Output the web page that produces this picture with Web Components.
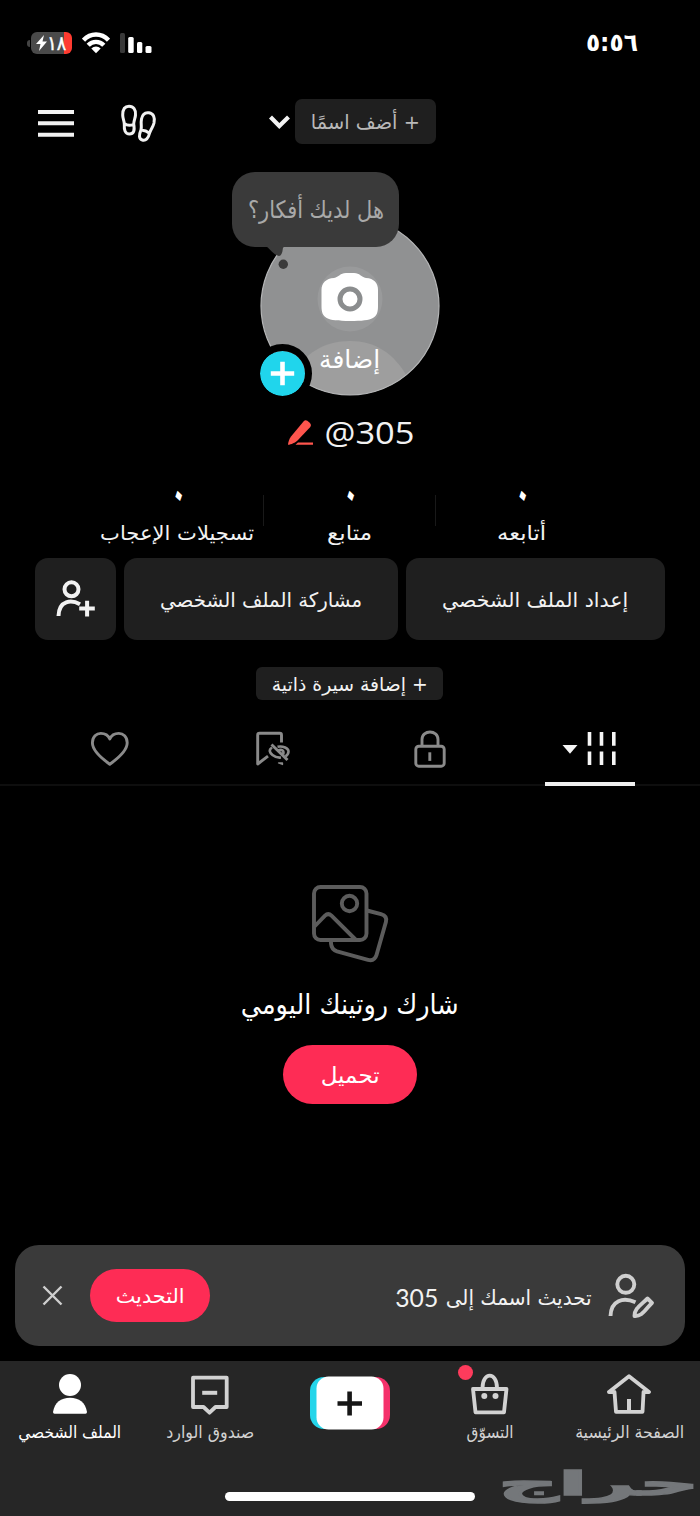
<!DOCTYPE html>
<html lang="ar">
<head>
<meta charset="utf-8">
<title>الملف الشخصي</title>
<style>
html,body{margin:0;background:#000}
body{width:700px;height:1516px;overflow:hidden;font-family:"DejaVu Sans","Noto Sans",sans-serif;color:#f2f2f2}
</style>
</head>
<body>
<profile-page></profile-page>
<script>
const define=(n,html,fn)=>{
  const t=document.createElement('template');t.innerHTML=html;
  customElements.define(n,class extends HTMLElement{
    connectedCallback(){
      if(this.shadowRoot)return;
      this.attachShadow({mode:'open'}).append(t.content.cloneNode(true));
      if(fn)fn(this,this.shadowRoot);
    }
  });
};

/* One line of text squeezed or stretched to the width w; y nudges the baseline. */
define('fit-text',`<style>
:host{display:inline-flex;justify-content:center;flex:none;white-space:nowrap;line-height:1;direction:rtl}
span{display:block;flex:none;transform-origin:50% 50%}
</style><span><slot></slot></span>`,(el,r)=>{
  const s=r.querySelector('span'),w=+el.getAttribute('w');
  el.style.width=w+'px';el.style.height=el.getAttribute('s')+'px';
  el.style.fontSize=el.getAttribute('s')+'px';
  const n=s.getBoundingClientRect().width||w;
  s.style.transform=`translateY(${el.getAttribute('y')||0}px) scaleX(${w/n})`;
});

/* Icons: [viewBox, markup]. */
const S='fill="none" stroke="currentColor" stroke-linecap="round" stroke-linejoin="round"';
const ICONS={
wifi:['82 32 28 22',`<g fill="none" stroke="currentColor" stroke-width="4.4"><path d="M83.5 40.2C90.5 32.6 101.500 32.600 108.500 40.200"/><path d="M88.200 45.300C92.500 40.700 99.500 40.700 103.800 45.300"/></g><path d="M91.300 48.500C94 45.800 98 45.800 100.700 48.500L96 53.200Z" fill="currentColor"/>`],
signal:['120 32 32 22',`<g fill="currentColor"><rect x="120" y="33" width="5" height="20" rx="1.500" opacity=".22"/><rect x="128.200" y="37" width="5.500" height="16" rx="1.500"/><rect x="137" y="42" width="5.300" height="11" rx="1.500"/><rect x="145.500" y="46" width="6" height="7" rx="1.500"/></g>`],
menu:['38 104 36 38',`<path d="M38 112h36M38 123.200h36M38 134.700h36" fill="none" stroke="currentColor" stroke-width="4"/>`],
feet:['120 103 38 40',`<g ${S} stroke-width="3"><path d="M122.700 115C122.700 109 125 106.200 129 106.200C133.500 106.200 136 109.500 135.500 115C135.200 118.500 134 119.500 133.700 124C135 131 133.500 134 129.500 134C125 134 124 130 124.300 124C124.300 120.500 122.700 119 122.700 115ZM124.300 123.500C127 125.500 130 126 133.700 124.300"/><path d="M141.500 119C142.500 114 145 112.200 149 112.800C153.500 113.600 155.200 117.500 154 123C153 127 151.500 128 149.800 132.500C148.300 138.500 145.800 141 142.300 140C138.700 139 138.800 135 141 129.800C142 126 140.500 124 141.500 119ZM140.800 130.500C143.500 130 146.500 131 149.500 133.200"/></g>`],
chev:['268 113 23 18',`<path d="M270.500 116L279.300 125L288.500 116" fill="none" stroke="currentColor" stroke-width="4.200"/>`],
plus:['268 359 29 29',`<path d="M270.800 373.500h23.400M282.500 361.800v23.400" stroke="currentColor" stroke-width="4.600"/>`],
pencil:['286 419 28 28',`<g fill="#fe554d"><path d="M288 444.800C288 442.500 289.500 438.500 291 436.500L303.500 421.500Q305.300 419.500 307.300 420.800L310 423Q311.900 425 310.300 426.900L297.500 440.500C295.500 442.500 291 444.700 288 444.800Z"/><path d="M298 442.600h15v2.200h-17.500z"/></g>`],
adduser:['54.500 578 42 42',`<g fill="none" stroke="currentColor" stroke-width="4"><circle cx="71" cy="589.300" r="7"/><path d="M58 616C58.500 600 71 599.500 79.500 604.300M78.700 608.500h15.600M86.600 600.800v15.600"/></g>`],
heart:['90 730 40 38',`<path ${S} stroke-width="2.900" d="M109.800 764.200C101 758 92.400 750.500 92.400 742.800C92.400 736.500 96.500 733.400 100.800 733.400C105 733.400 108.300 735.500 109.800 739C111.300 735.500 114.600 733.400 118.800 733.400C123.100 733.400 127.200 736.500 127.200 742.800C127.200 750.500 118.600 758 109.800 764.200Z"/>`],
save:['255 730 38 38',`<g fill="none" stroke="currentColor" stroke-width="2.900" stroke-linejoin="round"><path d="M281.500 742.500V735Q281.500 733.300 279.800 733.300H259.500Q257.700 733.300 257.700 735V764L268 756.200"/><path stroke-width="2.600" d="M272 747.500C268.500 750 269.500 752.500 272.500 755C275 757 278.500 757.800 281 757.500M277.500 746.800C283 745.500 288.500 748.500 288.500 751.500C288.500 753 287.500 755 285.500 756.300M278 750.500C282 748.500 284.500 751 283 754.500"/><path d="M271.500 744.500L287.500 760"/><path d="M278.500 763h4v1.500z" stroke-width="1.300"/></g>`],
lock:['413 728 34 40',`<g fill="none" stroke="currentColor" stroke-width="2.900"><rect x="415.800" y="745.200" width="28.400" height="20" rx="3"/><path d="M422 745V738.500C422 728.500 438 728.500 438 738.500V745"/><path d="M429.800 751.300v8.600"/></g>`],
grid:['561 730 56 38',`<path d="M561.500 745h15l-7.500 8.800z" fill="currentColor"/><path d="M588.500 732v13.700M600.500 732v13.700M612.800 732v13.700M588.500 751.500V765M600.500 751.500V765M612.800 751.500V765" stroke="currentColor" stroke-width="3.600"/>`],
photos:['310 882 80 82',`<g fill="none" stroke="currentColor" stroke-width="3.900" stroke-linejoin="round"><rect x="314" y="887" width="52.500" height="53" rx="6.500"/><circle cx="349.500" cy="903.500" r="7.700"/><path d="M314.500 926.500L325 915.700Q328.200 912.600 331.500 915.700L355.500 939.500M367 910.500L381 914.200Q387.500 916 385.900 922L376.500 955Q374.500 961.500 368 959.800L337 951.300Q331.500 949.500 331 943.500V940"/></g>`],
edituser:['606 1272 50 48',`<g fill="none" stroke="currentColor" stroke-width="3.900" stroke-linejoin="round"><circle cx="625.800" cy="1284.300" r="8.500"/><path d="M610.500 1316C611 1300.500 623 1296.500 635.500 1302.300"/><path d="M634.500 1316C634.500 1309 639 1306.500 647.500 1298.500L652 1302.800C644 1311 642 1316.500 634.500 1316Z"/></g>`],
close:['42 1285 21 21',`<path d="M43.500 1286.500L61.500 1304.500M61.500 1286.500L43.500 1304.500" fill="none" stroke="currentColor" stroke-width="2.400"/>`],
person:['50 1372 40 44',`<g fill="currentColor"><circle cx="70" cy="1385" r="11"/><path d="M53 1412C54.500 1402.500 61 1397.700 70 1397.700S85.500 1402.500 87 1412Q87 1413.800 85.500 1413.800H54.500Q53 1413.800 53 1412Z"/></g>`],
inbox:['190 1372 40 44',`<path ${S} stroke-width="3.800" d="M193 1377.700H226.700V1407H215.500L209.500 1412.700L203.500 1407H193Z"/><path d="M202.200 1392.800h15" stroke="currentColor" stroke-width="4"/>`],
create:['308 1372 84 60',`<rect x="310" y="1377" width="60" height="52" rx="14" fill="#25d5ea"/><rect x="330" y="1377" width="60" height="52" rx="14" fill="#f5316b"/><rect x="316.500" y="1376.500" width="67" height="53" rx="12" fill="#fff"/><path d="M337.500 1403.500h24.500M349.600 1391.500v24" stroke="#161616" stroke-width="4.600"/>`],
bag:['470 1372 40 44',`<g ${S} stroke-width="3.800"><path d="M473 1389H506.500L504 1412.300H475.500Z"/><path d="M482.500 1388C482.500 1371.500 497 1371.500 497 1388"/></g><g fill="currentColor"><circle cx="484.300" cy="1396" r="3"/><circle cx="495.500" cy="1396" r="3"/></g>`],
house:['607 1372 46 44',`<path ${S} stroke-width="3.800" d="M609 1392L629 1376.200L649 1392H643.500V1393L642.500 1411.800H616L614.500 1392H609"/><path d="M629 1399v12" stroke="currentColor" stroke-width="4"/>`]
};
define('ui-icon',`<style>:host{display:block;flex:none}svg{display:block}</style><svg></svg>`,(el,r)=>{
  const [vb,m]=ICONS[el.getAttribute('name')],v=vb.split(' '),s=r.querySelector('svg');
  s.setAttribute('viewBox',vb);s.setAttribute('width',v[2]);s.setAttribute('height',v[3]);s.innerHTML=m;
});

define('status-bar',`<style>
:host{display:flex;height:86px;padding:0 62px 0 27px;align-items:center;color:#fff;box-sizing:border-box}
.nub{width:3px;height:7px;border-radius:3px 0 0 3px;background:#444;margin-right:1px}
.bat{width:41px;height:22px;border-radius:6px;background:linear-gradient(90deg,#4a4a4a 33px,#ff3b30 33px);display:flex;align-items:center;gap:0;padding-left:5px;box-sizing:border-box}
.wifi{margin:0 10px}.time{margin-left:auto}
</style><i class="nub"></i><div class="bat"><svg width="11" height="16" viewBox="0 0 11 16"><path d="M8 0L0 9h4.500L3 16l8-9.500H6.500z" fill="#fff"/></svg><fit-text w="19" s="20" y="0" style="-webkit-text-stroke:.5px #fff">١٨</fit-text></div>
<ui-icon class="wifi" name="wifi"></ui-icon><ui-icon name="signal"></ui-icon><fit-text class="time" w="52" s="25" y="-1.500" style="font-weight:bold">٥:٥٦</fit-text>`);

define('text-chip',`<style>:host{display:flex;align-items:center;justify-content:center;background:#1f1f1f;border-radius:7px;box-sizing:border-box;flex:none}</style><slot></slot>`);

define('top-bar',`<style>
:host{display:flex;height:74px;padding:0 0 0 38px;align-items:center;box-sizing:border-box}
.feet{margin-left:46px}.chev{margin:0 4px 0 110px}
text-chip{width:141px;height:45px;color:#b9b9b9;margin-bottom:4px}
</style><ui-icon name="menu"></ui-icon><ui-icon class="feet" name="feet"></ui-icon><ui-icon class="chev" name="chev"></ui-icon><text-chip><fit-text w="109" s="20" y="1">+ أضف اسمًا</fit-text></text-chip>`);

/* Picture placeholder with the thought bubble and the add badge laid over it. */
define('profile-photo',`<style>
:host{display:block;position:relative;width:180px;height:180px;margin:56px 0 0 260px}
.art{display:block}
.cap{position:absolute;left:59px;top:131px;color:#fff}
.bub{position:absolute;left:-28px;top:-44px;width:167px;height:75px;border-radius:23px;background:#3a3a3a;display:flex;align-items:center;justify-content:center;color:#a9a9a9}
.tail{position:absolute;left:0;top:28px}
.add{position:absolute;left:-7px;top:128px;width:45px;height:45px;border:7px solid #000;border-radius:50%;background:#20d5ec;background-clip:padding-box;display:flex;align-items:center;justify-content:center;color:#fff}
</style>
<svg class="art" width="180" height="180" viewBox="260 216 180 180"><defs><clipPath id="c"><circle cx="350" cy="306" r="89"/></clipPath></defs><circle cx="350" cy="306" r="89" fill="#909192"/><g clip-path="url(#c)" fill="#9e9e9e"><circle cx="350" cy="299" r="32.500" fill="#999a9b"/><path d="M292 378C303 353 325 341 350 341S394 353 408 378V400H292Z"/></g><circle cx="350" cy="306" r="89" fill="none" stroke="#b5b6b7" stroke-width="1.200"/>
<path d="M334 278C339 277 340 273 346 273H354C360 273 361 277 366 278C374 278.500 378 283 378 290V306C378 318 374 321 350 321S321.500 318 321.500 306V290C321.500 283 326 278.500 334 278Z" fill="#fff"/><circle cx="350" cy="299" r="10" fill="#fff" stroke="#8b8d8e" stroke-width="5"/></svg>
<fit-text class="cap" w="61" s="25" y="0">إضافة</fit-text>
<div class="bub"><fit-text w="136" s="24" y="0">هل لديك أفكار؟</fit-text></div>
<svg class="tail" width="32" height="28" viewBox="260 244 32 28"><path d="M264 245C270 248 273 255 279 256Q282 256 283 248L286 245Z" fill="#3a3a3a"/><circle cx="283.300" cy="264.300" r="4.700" fill="#3a3a3a"/></svg>
<div class="add"><ui-icon name="plus"></ui-icon></div>`);

define('user-handle',`<style>:host{display:flex;height:34px;margin:20px 0 0 286px;align-items:center}fit-text{direction:ltr;margin-left:10px;font-family:"Open Sans",sans-serif;font-weight:500}</style><ui-icon name="pencil"></ui-icon><fit-text w="90" s="31" y="-1" dir="ltr">@305</fit-text>`);

/* The Arabic zero is drawn as a small slanted diamond. */
define('stat-item',`<style>:host{display:flex;flex-direction:column;align-items:center;width:171px;box-sizing:border-box;height:66px}b{display:block;font-size:36px;line-height:30px;height:30px;color:#fff;transform-origin:50% 17px;transform:translate(.8px,-1px) rotate(-14deg) scale(.78,1.2) rotate(45deg)}</style><b><slot name="n"></slot></b><slot></slot>`);
define('stats-row',`<style>:host{display:flex;height:76px;margin-top:30px;padding-left:92px;box-sizing:border-box}i{width:1px;height:31px;margin-top:15px;background:#191919;flex:none}stat-item{width:171px}fit-text{margin-top:13px}</style>
<stat-item><span slot="n">٠</span><fit-text w="154" s="20">تسجيلات الإعجاب</fit-text></stat-item><i></i><stat-item><span slot="n">٠</span><fit-text w="45" s="20">متابع</fit-text></stat-item><i></i><stat-item><span slot="n">٠</span><fit-text w="49" s="20">أتابعه</fit-text></stat-item>`);

define('action-row',`<style>:host{display:flex;gap:8px;padding:0 35px;margin-top:2px;height:82px}
text-chip{border-radius:13px;height:82px}.a{width:81px}.b{width:273.500px}.c{flex:1}</style>
<text-chip class="a"><ui-icon name="adduser"></ui-icon></text-chip><text-chip class="b"><fit-text w="202" s="20" y="1">مشاركة الملف الشخصي</fit-text></text-chip><text-chip class="c"><fit-text w="186" s="20" y="1">إعداد الملف الشخصي</fit-text></text-chip>`);

define('bio-row',`<style>:host{display:flex;justify-content:center;margin-top:27px;height:33px;padding-right:1px}text-chip{width:187px;border-radius:6px}</style><text-chip><fit-text w="156" s="19" y="1">+ إضافة سيرة ذاتية</fit-text></text-chip>`);

define('tab-strip',`<style>:host{display:grid;grid-template-columns:160px 160px 160px 160px;padding:0 30px;height:86px;border-bottom:2px solid #0e0e0e;box-sizing:border-box;color:#8a8a8a}
div{display:flex;align-items:center;justify-content:center;padding-bottom:0;padding-top:14px;height:84px;box-sizing:border-box;position:relative}
.on{color:#f5f5f5}.on::after{content:"";position:absolute;left:35px;bottom:-2px;width:90px;height:4px;background:#f0f0f0}</style>
<div><ui-icon name="heart"></ui-icon></div><div><ui-icon name="save" style="margin-left:8px"></ui-icon></div><div><ui-icon name="lock"></ui-icon></div><div class="on"><ui-icon name="grid"></ui-icon></div>`);

define('pill-button',`<style>:host{display:flex;align-items:center;justify-content:center;background:#fe2c55;color:#fff;border-radius:40px;flex:none}</style><slot></slot>`);
define('empty-state',`<style>:host{display:flex;flex-direction:column;align-items:center;padding-top:96px;height:459px;box-sizing:border-box}
ui-icon{color:#5c5c5c}.t{margin-top:25px;color:#fff}pill-button{width:134px;height:59px;margin-top:28px}</style>
<ui-icon name="photos"></ui-icon><fit-text class="t" w="218" s="28" y="1.5">شارك روتينك اليومي</fit-text><pill-button><fit-text w="59" s="22" y="1">تحميل</fit-text></pill-button>`);

define('update-banner',`<style>:host{display:flex;align-items:center;margin:0 15px;height:101px;background:#3a3a3a;border-radius:24px;padding:0 29px 0 27px;box-sizing:border-box;color:#cfcfcf}
pill-button{width:119.500px;height:53px;margin-left:27px}.t{display:flex;margin:0 14px 0 auto;gap:8px;align-items:center;color:#f2f2f2}.n{font-family:Lato,sans-serif}</style>
<ui-icon name="close"></ui-icon><pill-button><fit-text w="69" s="20">التحديث</fit-text></pill-button><div class="t"><fit-text class="n" w="43" s="25" y="2">305</fit-text><fit-text w="146" s="21" y="3">تحديث اسمك إلى</fit-text></div><ui-icon name="edituser"></ui-icon>`);

define('nav-item',`<style>:host{display:flex;flex-direction:column;align-items:center;width:140px;position:relative;color:#d2d2d2}i{position:absolute;left:38px;top:-7px;width:15px;height:15px;border-radius:50%;background:#fe3b5c;display:none}:host([dot]) i{display:block}</style><slot></slot><i></i>`);
define('bottom-nav',`<style>:host{display:block;position:relative;height:155px;margin-top:15px;background:#262626}
nav{display:flex;padding-top:11px}nav fit-text{margin-top:8px}.on{color:#fff}
.bar{width:250px;height:9px;border-radius:5px;background:#fff;position:absolute;left:225px;top:131px}
.wm{position:absolute;left:498px;top:106px;font-weight:bold;color:#74777a;-webkit-text-stroke:1.500px #74777a}</style>
<nav><nav-item class="on"><ui-icon name="person"></ui-icon><fit-text w="103" s="17">الملف الشخصي</fit-text></nav-item><nav-item><ui-icon name="inbox"></ui-icon><fit-text w="88" s="17">صندوق الوارد</fit-text></nav-item><nav-item><ui-icon name="create"></ui-icon></nav-item><nav-item dot><ui-icon name="bag"></ui-icon><fit-text w="47" s="17">التسوّق</fit-text></nav-item><nav-item><ui-icon name="house"></ui-icon><fit-text w="109" s="17">الصفحة الرئيسية</fit-text></nav-item></nav>
<div class="bar"></div><fit-text class="wm" w="201" s="33">حراج</fit-text>`);

define('profile-page',`<style>:host{display:flex;flex-direction:column;width:700px;height:1516px;background:#000;overflow:hidden}:host>*{flex:none}</style>
<status-bar></status-bar><top-bar></top-bar><profile-photo></profile-photo><user-handle></user-handle><stats-row></stats-row><action-row></action-row><bio-row></bio-row><tab-strip></tab-strip><empty-state></empty-state><update-banner></update-banner><bottom-nav></bottom-nav>`);
</script>
</body>
</html>
